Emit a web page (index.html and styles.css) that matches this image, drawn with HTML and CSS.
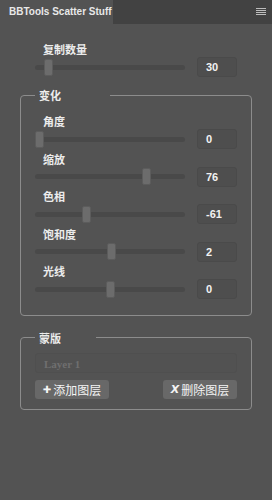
FILE: index.html
```html
<!DOCTYPE html>
<html lang="zh">
<head>
  <meta charset="UTF-8">
  <title>BBTools Scatter Stuff</title>
  <link rel="stylesheet" href="styles.css">
</head>
<body>
  <div class="tabbar">
    <div class="tab">BBTools Scatter Stuff</div>
    <div class="menu-icon">
      <span></span><span></span><span></span><span></span>
    </div>
  </div>

  <div class="panel">
    <!-- copy count -->
    <div class="row row-top">
      <div class="label">复制数量</div>
      <div class="control">
        <div class="track"><div class="thumb" style="--pos: 0.064"></div></div>
        <div class="num">30</div>
      </div>
    </div>

    <fieldset class="group group-change">
      <legend class="legend-change">变化</legend>
      <div class="row">
        <div class="label">角度</div>
        <div class="control">
          <div class="track"><div class="thumb" style="--pos: 0"></div></div>
          <div class="num">0</div>
        </div>
      </div>
      <div class="row">
        <div class="label">缩放</div>
        <div class="control">
          <div class="track"><div class="thumb" style="--pos: 0.76"></div></div>
          <div class="num">76</div>
        </div>
      </div>
      <div class="row">
        <div class="label">色相</div>
        <div class="control">
          <div class="track"><div class="thumb" style="--pos: 0.33"></div></div>
          <div class="num">-61</div>
        </div>
      </div>
      <div class="row">
        <div class="label">饱和度</div>
        <div class="control">
          <div class="track"><div class="thumb" style="--pos: 0.51"></div></div>
          <div class="num">2</div>
        </div>
      </div>
      <div class="row">
        <div class="label">光线</div>
        <div class="control">
          <div class="track"><div class="thumb" style="--pos: 0.5"></div></div>
          <div class="num">0</div>
        </div>
      </div>
    </fieldset>

    <fieldset class="group group-mask">
      <legend class="legend-mask">蒙版</legend>
      <div class="layer-input">Layer 1</div>
      <div class="buttons">
        <button class="btn"><span class="btn-icon">✚</span>添加图层</button>
        <button class="btn"><span class="btn-icon btn-icon-x">X</span>删除图层</button>
      </div>
    </fieldset>
  </div>
</body>
</html>
```

FILE: styles.css
```css
body {
  margin: 0;
  background-color: #535353;
  font-family: "Liberation Sans", "Noto Sans CJK SC", sans-serif;
  color: #e6e6e6;
  height: 500px;
  overflow: hidden;
}

/* tab bar */
.tabbar {
  display: flex;
  justify-content: space-between;
  height: 24px;
  background-color: #424242;
}

.tab {
  width: 104px;
  padding-left: 9px;
  background-color: #535353;
  font-size: 10px;
  font-weight: bold;
  line-height: 24px;
  color: #e8e8e8;
  white-space: nowrap;
}

.menu-icon {
  display: flex;
  flex-direction: column;
  gap: 1px;
  margin: 8px 6px 0 0;
}

.menu-icon span {
  display: block;
  width: 10px;
  height: 1px;
  background-color: #bdbdbd;
}

/* content */
.panel {
  padding: 17px 20px 0 20px;
}

.row {
  margin-bottom: 1.5px;
}

.row-top {
  padding: 0 15px;
  margin-bottom: 0;
}

.label {
  height: 16px;
  line-height: 16px;
  padding-left: 8px;
  font-family: "Noto Sans CJK SC", sans-serif;
  font-size: 11px;
  font-weight: bold;
  color: #ececec;
}

.control {
  display: flex;
  align-items: center;
  justify-content: space-between;
  height: 20px;
}

.track {
  position: relative;
  width: 150px;
  height: 5px;
  border-radius: 3px;
  background-color: #494949;
}

/* --pos is the slider value mapped to 0..1 */
.thumb {
  position: absolute;
  top: -6px;
  left: calc(var(--pos) * (100% - 9px));
  box-sizing: border-box;
  width: 9px;
  height: 17px;
  border: 1px solid #5c5c5c;
  border-radius: 2px;
  background-color: #6c6c6c;
}

.num {
  box-sizing: border-box;
  width: 40px;
  height: 20px;
  padding-left: 8px;
  line-height: 19px;
  border: 1px solid #4a4a4a;
  border-radius: 3px;
  background-color: #4e4e4e;
  font-size: 11px;
  font-weight: bold;
  color: #f2f2f2;
}

/* groups */
.group {
  margin: 0;
  padding: 0 14px 14px 14px;
  border: 1px solid #8c8c8c;
  border-radius: 4px;
}

.group-change {
  margin-top: 11px;
  padding-top: 11px;
}

.group-mask {
  margin-top: 15px;
  padding-top: 8px;
  padding-bottom: 10px;
}

legend {
  box-sizing: border-box;
  padding: 0 0 0 4px;
  font-family: "Noto Sans CJK SC", sans-serif;
  font-size: 11px;
  font-weight: bold;
  line-height: 14px;
  color: #ececec;
}

.legend-change {
  width: 75px;
}

.legend-mask {
  width: 61px;
}

.layer-input {
  box-sizing: border-box;
  height: 20px;
  padding-left: 8px;
  line-height: 20px;
  border: 1px solid #4f4f4f;
  border-radius: 3px;
  background-color: #525252;
  font-family: "Liberation Serif", serif;
  font-size: 11px;
  font-weight: bold;
  color: #6f6f6f;
}

.buttons {
  display: flex;
  justify-content: space-between;
  margin-top: 7px;
}

.btn {
  display: flex;
  align-items: center;
  justify-content: center;
  width: 74px;
  height: 19px;
  padding: 0;
  border: none;
  border-radius: 3px;
  background-color: #686868;
  font-family: "Noto Sans CJK SC", sans-serif;
  font-size: 12px;
  color: #f4f4f4;
}

.btn-icon {
  margin-right: 2px;
  font-family: "DejaVu Sans", sans-serif;
  font-size: 10px;
  font-weight: bold;
}

.btn-icon-x {
  font-size: 11px;
  font-style: italic;
}
```
